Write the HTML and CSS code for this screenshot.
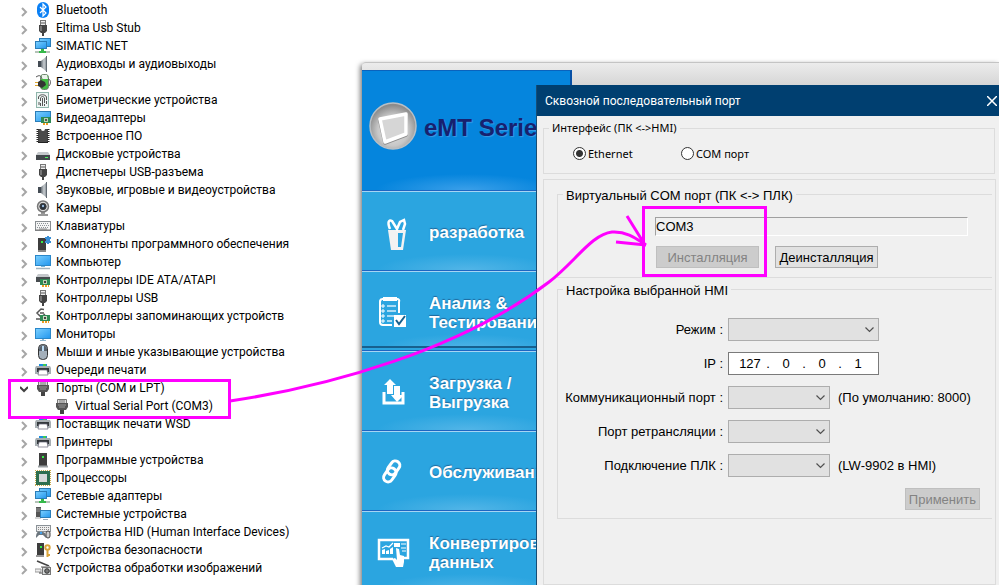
FILE: index.html
```html
<!DOCTYPE html>
<html lang="ru">
<head>
<meta charset="utf-8">
<meta name="viewport" content="width=device-width, initial-scale=1">
<title>Сквозной последовательный порт</title>
<link rel="stylesheet" href="styles.css">
</head>
<body>
<svg class="sprite" aria-hidden="true">
  <defs>
    <linearGradient id="g-screen" x1="0" y1="0" x2="1" y2="1"><stop offset="0" stop-color="#7cd0ff"/><stop offset="1" stop-color="#2196ee"/></linearGradient>
    <linearGradient id="g-metal" x1="0" y1="0" x2="1" y2="0"><stop offset="0" stop-color="#666e75"/><stop offset=".5" stop-color="#c8cdd1"/><stop offset="1" stop-color="#777f86"/></linearGradient>
    <radialGradient id="g-badge" cx=".5" cy=".6" r=".55"><stop offset="0" stop-color="#e2e2e2"/><stop offset=".6" stop-color="#c8c8c8"/><stop offset="1" stop-color="#8c8c8c"/></radialGradient>
  </defs>
  <symbol id="chevron" viewBox="0 0 8 10"><path d="M2 1l4 4-4 4" fill="none" stroke="#a6a6a6" stroke-width="2"/></symbol>
  <symbol id="chevron-open" viewBox="0 0 8 10"><path d="M0 2l4 4 4-4" fill="none" stroke="#404040" stroke-width="2"/></symbol>
  <symbol id="bluetooth" viewBox="0 0 16 16"><rect x="2" width="12" height="16" rx="6" fill="#0a80f5"/><path d="M5 5l6 6-3 3V2l3 3-6 6" fill="none" stroke="#fff" stroke-width="1.2"/></symbol>
  <symbol id="usb" viewBox="0 0 16 16"><rect x="5.500" y=".5" width="5" height="5" fill="#eee" stroke="#777"/><path d="M7 2v2M9 2v2" stroke="#555"/><path d="M4 5h8v6l-2 2H6l-2-2z" fill="#444"/><path d="M5 6h2v5H5z" fill="#777"/><path d="M7 13h2v3H7z" fill="#444"/></symbol>
  <symbol id="net" viewBox="0 0 16 16"><rect x="4.500" y=".5" width="11" height="8" fill="url(#g-screen)" stroke="#2a7db8"/><rect x=".5" y="3.500" width="11" height="7" fill="url(#g-screen)" stroke="#2a7db8"/><path d="M6 11h3v2h2v2H4v-2h2z" fill="#35b84a"/><path d="M0 13h4v2H0zM11 13h4v2h-4z" fill="#b5c3b8"/></symbol>
  <symbol id="speaker" viewBox="0 0 16 16"><path d="M3 5h3v6H3z" fill="#444c54"/><path d="M6 5l6-5v16l-6-5z" fill="url(#g-metal)"/><path d="M11 0h1v16h-1z" fill="#626a72"/></symbol>
  <symbol id="battery" viewBox="0 0 16 16"><rect x="5.500" y=".5" width="8" height="15" rx="3" fill="#43ba43" stroke="#6c7d6c"/><path d="M7 1h5l1 4H6z" fill="#e9f2e9"/><path d="M1 3c3-2 5-2 6 2M13 5c3 0 3 5 1 7" fill="none" stroke="#555"/><path d="M3 8l3-2 4 2 1 3-4 3-4-2z" fill="#333"/><path d="M0 8.500h3M0 11.500h3" stroke="#dda52c"/></symbol>
  <symbol id="finger" viewBox="0 0 16 16"><rect x="1.500" y=".5" width="12" height="15" fill="#edf5f3" stroke="#8fb5ab"/><g fill="none" stroke="#555"><path d="M3.500 7V5c1-3 7-3 8 0v3M5.500 9V6c1-2 3-2 4 0v5M4 10v3M7.500 6v8M5.500 11v3M9.500 12v2M11.500 9v3"/></g></symbol>
  <symbol id="adapter" viewBox="0 0 16 16"><rect x=".5" y="1.500" width="15" height="10" fill="url(#g-screen)" stroke="#2a7db8"/><rect x="6" y="7" width="10" height="6" fill="#2f8a55"/><path d="M9 8h4v4H9z" fill="#b7d3b0"/><path d="M10 9h2v2h-2z" fill="#555"/><path d="M8 14h6" stroke="#f09c23" stroke-width="2" stroke-dasharray="2 1"/></symbol>
  <symbol id="chip" viewBox="0 0 16 16"><path d="M3 1h3a2 2 0 0 0 4 0h3v14H3z" fill="#4a4a4a"/><path d="M2.500 1v14M13.500 1v14" stroke="#222" stroke-width="2" stroke-dasharray="1 1"/><path d="M3 14.500h10" stroke="#222"/></symbol>
  <symbol id="disk" viewBox="0 0 16 16"><path d="M3 6h10l2 3H1z" fill="#c4c8cb"/><rect x="1" y="9" width="14" height="5" fill="#42474b"/><rect x="10" y="11" width="3" height="1" fill="#4cf062"/></symbol>
  <symbol id="camera" viewBox="0 0 16 16"><circle cx="8" cy="6.500" r="5.500" fill="#ddd" stroke="#777" stroke-width="1.500"/><circle cx="8" cy="6.500" r="3.200" fill="#28313b" stroke="#444"/><circle cx="8" cy="6" r="1.200" fill="#97b8dc"/><path d="M3 15h10M6 13h4" stroke="#777" stroke-width="1.500"/></symbol>
  <symbol id="keyboard" viewBox="0 0 16 16"><rect x=".5" y="3.500" width="15" height="9" fill="#f5f5f5" stroke="#888d91"/><path d="M2 5.500h12M3 7.500h11M2 9.500h12" stroke="#8b9297" stroke-dasharray="1 1"/><path d="M4 11h8" stroke="#888"/><path d="M0 12h16" stroke="#777"/></symbol>
  <symbol id="tower" viewBox="0 0 16 16"><path d="M4 1h8v13H4z" fill="#3d3d3d"/><path d="M7 4h2v2H7z" fill="#35ee45"/><path d="M3 14.500h10" stroke="#9aa0a3" stroke-width="2"/></symbol>
  <symbol id="component" viewBox="0 0 16 16"><path d="M3 2h8v12H3z" fill="#3d3d3d"/><path d="M6 5h2v2H6z" fill="#35ee45"/><path d="M3 15h8" stroke="#888" stroke-width="2"/><path d="M10 1h2V0h2v1h2v2h-1v2h1v2h-2v1h-2V7h-2V5h1V3h-1z" fill="#3a8fd6"/></symbol>
  <symbol id="computer" viewBox="0 0 16 16"><rect x=".5" y="1.500" width="15" height="10" fill="url(#g-screen)" stroke="#2a87c9"/><path d="M6 12h4v1H6z" fill="#75b5dc"/><path d="M1 14.500h14" stroke="#a2b4bf" stroke-width="1.500"/></symbol>
  <symbol id="ide" viewBox="0 0 16 16"><path d="M3 2h10l2 3H1z" fill="#c4c8cb"/><path d="M1 5h14v5H1z" fill="#474c4f"/><path d="M5 7h10v6H5z" fill="#2f8a55"/><path d="M8 8h4v4H8z" fill="#b7d3b0"/><path d="M9 9h2v2H9z" fill="#444"/><path d="M7 14h7" stroke="#f09c23" stroke-width="2" stroke-dasharray="2 1"/></symbol>
  <symbol id="storage" viewBox="0 0 16 16"><path d="M9 1.500L6 1 2 5l4 4 4-3M1 11h5M5 5h4" fill="none" stroke="#555" stroke-width="1.500"/><path d="M5 7h10v6H5z" fill="#2f8a55"/><path d="M8 8h4v4H8z" fill="#c7dcc1"/><path d="M9 9h2v2H9z" fill="#444"/><path d="M7 14h7" stroke="#f09c23" stroke-width="2" stroke-dasharray="2 1"/></symbol>
  <symbol id="monitor" viewBox="0 0 16 16"><rect x=".5" y="2.500" width="15" height="10" fill="url(#g-screen)" stroke="#2a87c9"/><path d="M7 13h2v1h2v1H5v-1h2z" fill="#8fb7cf"/></symbol>
  <symbol id="mouse" viewBox="0 0 16 16"><rect x="3.500" y=".5" width="9" height="15" rx="4" fill="#a3afba" stroke="#333"/><path d="M4 5c1-5 7-5 8 0v2H4z" fill="#5a646e"/><rect x="7" y="2" width="2" height="5" fill="#b9dbf5"/></symbol>
  <symbol id="printer" viewBox="0 0 16 16"><path d="M4 2h8v3H4z" fill="#1b8fe2"/><path d="M8 2h3v2H8z" fill="#41cb52"/><path d="M1 4h14l1 2v6H0V6z" fill="#a8afb3"/><path d="M2 6h12v4H2z" fill="#34393c"/><path d="M4 8h8l1 5H3z" fill="#fff" stroke="#667" stroke-width=".7"/></symbol>
  <symbol id="port" viewBox="0 0 16 16"><path d="M3.500 1.500h9v4h-9z" fill="#ddd" stroke="#777"/><path d="M6 2v3M8 2v3M10 2v3" stroke="#777"/><path d="M2 5h12v4l-2 3H4L2 9z" fill="#555"/><path d="M4 7h8M5 9h6" stroke="#999"/><path d="M6 12h4v4H6z" fill="#444"/></symbol>
  <symbol id="cpu" viewBox="0 0 16 16"><path d="M0 .5h16M0 15.500h16M.5 0v16M15.500 0v16" stroke="#c7a94c" stroke-dasharray="1 1"/><rect x="1" y="1" width="14" height="14" fill="#2d6e4e"/><path d="M4 4h8v8H4z" fill="#d7d9d8"/></symbol>
  <symbol id="system" viewBox="0 0 16 16"><path d="M1 1h5v10H1z" fill="#555"/><path d="M1 3h5M1 5h5" stroke="#999"/><path d="M0 12h6" stroke="#aaa"/><rect x="5.500" y="4.500" width="10" height="7" fill="url(#g-screen)" stroke="#2a7db8"/><path d="M8 13.500h5" stroke="#9ab"/></symbol>
  <symbol id="hid" viewBox="0 0 16 16"><rect x="1.500" y="1.500" width="14" height="6" fill="#eee" stroke="#8b9297"/><path d="M3 3.500h11M3 5.500h11" stroke="#888" stroke-dasharray="1 1"/><path d="M1 14c0-6 2-7 4-6h3c2 0 3 3 3 6l-3-3H4z" fill="#6b757d"/><circle cx="6" cy="9" r="1.200" fill="#46a3ee"/><rect x="11" y="7" width="4" height="7" rx="2" fill="#ccc" stroke="#444"/></symbol>
  <symbol id="security" viewBox="0 0 16 16"><path d="M2 1h7v12H2z" fill="#3d3d3d"/><path d="M5 4h2v2H5z" fill="#35ee45"/><path d="M1 14h8" stroke="#999" stroke-width="2"/><circle cx="12.500" cy="5.500" r="2.200" fill="none" stroke="#d9a43b" stroke-width="2"/><path d="M12.500 8v7M13 13h2" stroke="#d9a43b" stroke-width="2"/></symbol>
  <symbol id="imaging" viewBox="0 0 16 16"><path d="M2 1l12 5" stroke="#444" stroke-width="1.500"/><path d="M6 6h9v2H6z" fill="#aaa"/><path d="M0 9h6v3H0z" fill="#eee" stroke="#999"/><path d="M4 13h5" stroke="#444"/><rect x="7.500" y="7.500" width="8" height="7" fill="#d7dada" stroke="#777"/><circle cx="12" cy="11" r="2.300" fill="#777" stroke="#333"/></symbol>
</svg>

<main class="desktop">
  <nav class="tree" aria-label="Устройства">
    <ul>
      <li class="node"><svg class="arrow"><use href="#chevron"/></svg><svg class="icon"><use href="#bluetooth"/></svg>Bluetooth</li>
      <li class="node"><svg class="arrow"><use href="#chevron"/></svg><svg class="icon"><use href="#usb"/></svg>Eltima Usb Stub</li>
      <li class="node"><svg class="arrow"><use href="#chevron"/></svg><svg class="icon"><use href="#net"/></svg>SIMATIC NET</li>
      <li class="node"><svg class="arrow"><use href="#chevron"/></svg><svg class="icon"><use href="#speaker"/></svg>Аудиовходы и аудиовыходы</li>
      <li class="node"><svg class="arrow"><use href="#chevron"/></svg><svg class="icon"><use href="#battery"/></svg>Батареи</li>
      <li class="node"><svg class="arrow"><use href="#chevron"/></svg><svg class="icon"><use href="#finger"/></svg>Биометрические устройства</li>
      <li class="node"><svg class="arrow"><use href="#chevron"/></svg><svg class="icon"><use href="#adapter"/></svg>Видеоадаптеры</li>
      <li class="node"><svg class="arrow"><use href="#chevron"/></svg><svg class="icon"><use href="#chip"/></svg>Встроенное ПО</li>
      <li class="node"><svg class="arrow"><use href="#chevron"/></svg><svg class="icon"><use href="#disk"/></svg>Дисковые устройства</li>
      <li class="node"><svg class="arrow"><use href="#chevron"/></svg><svg class="icon"><use href="#usb"/></svg>Диспетчеры USB-разъема</li>
      <li class="node"><svg class="arrow"><use href="#chevron"/></svg><svg class="icon"><use href="#speaker"/></svg>Звуковые, игровые и видеоустройства</li>
      <li class="node"><svg class="arrow"><use href="#chevron"/></svg><svg class="icon"><use href="#camera"/></svg>Камеры</li>
      <li class="node"><svg class="arrow"><use href="#chevron"/></svg><svg class="icon"><use href="#keyboard"/></svg>Клавиатуры</li>
      <li class="node"><svg class="arrow"><use href="#chevron"/></svg><svg class="icon"><use href="#component"/></svg>Компоненты программного обеспечения</li>
      <li class="node"><svg class="arrow"><use href="#chevron"/></svg><svg class="icon"><use href="#computer"/></svg>Компьютер</li>
      <li class="node"><svg class="arrow"><use href="#chevron"/></svg><svg class="icon"><use href="#ide"/></svg>Контроллеры IDE ATA/ATAPI</li>
      <li class="node"><svg class="arrow"><use href="#chevron"/></svg><svg class="icon"><use href="#usb"/></svg>Контроллеры USB</li>
      <li class="node"><svg class="arrow"><use href="#chevron"/></svg><svg class="icon"><use href="#storage"/></svg>Контроллеры запоминающих устройств</li>
      <li class="node"><svg class="arrow"><use href="#chevron"/></svg><svg class="icon"><use href="#monitor"/></svg>Мониторы</li>
      <li class="node"><svg class="arrow"><use href="#chevron"/></svg><svg class="icon"><use href="#mouse"/></svg>Мыши и иные указывающие устройства</li>
      <li class="node"><svg class="arrow"><use href="#chevron"/></svg><svg class="icon"><use href="#printer"/></svg>Очереди печати</li>
      <li class="node"><svg class="arrow"><use href="#chevron-open"/></svg><svg class="icon"><use href="#port"/></svg>Порты (COM и LPT)</li>
      <li class="node child"><svg class="icon"><use href="#port"/></svg>Virtual Serial Port (COM3)</li>
      <li class="node"><svg class="arrow"><use href="#chevron"/></svg><svg class="icon"><use href="#printer"/></svg>Поставщик печати WSD</li>
      <li class="node"><svg class="arrow"><use href="#chevron"/></svg><svg class="icon"><use href="#printer"/></svg>Принтеры</li>
      <li class="node"><svg class="arrow"><use href="#chevron"/></svg><svg class="icon"><use href="#tower"/></svg>Программные устройства</li>
      <li class="node"><svg class="arrow"><use href="#chevron"/></svg><svg class="icon"><use href="#cpu"/></svg>Процессоры</li>
      <li class="node"><svg class="arrow"><use href="#chevron"/></svg><svg class="icon"><use href="#net"/></svg>Сетевые адаптеры</li>
      <li class="node"><svg class="arrow"><use href="#chevron"/></svg><svg class="icon"><use href="#system"/></svg>Системные устройства</li>
      <li class="node"><svg class="arrow"><use href="#chevron"/></svg><svg class="icon"><use href="#hid"/></svg>Устройства HID (Human Interface Devices)</li>
      <li class="node"><svg class="arrow"><use href="#chevron"/></svg><svg class="icon"><use href="#security"/></svg>Устройства безопасности</li>
      <li class="node"><svg class="arrow"><use href="#chevron"/></svg><svg class="icon"><use href="#imaging"/></svg>Устройства обработки изображений</li>
    </ul>
  </nav>

  <section class="app">
    <div class="menu">
      <header class="brand">
        <svg class="badge" viewBox="0 0 48 48" aria-hidden="true"><circle cx="24" cy="24" r="23" fill="url(#g-badge)" stroke="#b9bfc4" stroke-width="1.500"/><path d="M11 19l26-6v20l-21 8z" fill="#d6d6d6" stroke="#8d8d8d" stroke-width="3.500" stroke-linejoin="round"/><path d="M11 17l26-5v20l-21 8z" fill="#d6d6d6" stroke="#fff" stroke-width="3.500" stroke-linejoin="round"/></svg>
        <h1>eMT Series</h1>
      </header>
      <button class="entry" type="button">
        <svg class="glyph" viewBox="0 0 36 36" aria-hidden="true"><path d="M11 15h18l-3 20H14z" fill="#f2f2f2"/><path d="M21 18h5l-2 14h-3z" fill="#2ba5e0"/><path d="M13 14c-3-7-1-10 2-8l5 8 3-7 4-2 1 4-2 6" fill="none" stroke="#fff" stroke-width="2.500"/></svg>
        <span>разработка</span>
      </button>
      <button class="entry last" type="button">
        <svg class="glyph" viewBox="0 0 36 36" aria-hidden="true"><path d="M5 4h15a2 2 0 0 1 2 3v11M5 4a3 3 0 0 0-2 3v20a3 3 0 0 0 3 3h9" fill="none" stroke="#fff" stroke-width="2"/><path d="M6 2h14v4H6z" fill="#fff"/><path d="M10 11h9M10 16h9M10 21h8M10 26h5" stroke="#d8eefa" stroke-width="1.500"/><path d="M5 10h2v2H5zM5 15h2v2H5zM5 20h2v2H5zM5 25h2v2H5z" fill="none" stroke="#fff"/><path d="M17 20h12v12H17z" fill="#fff"/><path d="M19 25l3 4 6-8" fill="none" stroke="#17608e" stroke-width="2"/></svg>
        <span>Анализ &amp;<br>Тестирование</span>
      </button>
      <button class="entry" type="button">
        <svg class="glyph" viewBox="0 0 36 36" aria-hidden="true"><path d="M7 17v11h19V17" fill="none" stroke="#fff" stroke-width="3"/><path d="M13 4l6 6h-3v9h-6v-9H7zM17 11h6v9h4l-7 7-6-7h3z" fill="#fff"/></svg>
        <span>Загрузка /<br>Выгрузка</span>
      </button>
      <button class="entry" type="button">
        <svg class="glyph" viewBox="0 0 36 36" aria-hidden="true"><g fill="none" stroke="#fff" stroke-width="3" transform="rotate(-55 15 16)"><rect x="3" y="12" width="15" height="9" rx="4.500"/><rect x="11" y="11" width="15" height="9" rx="4.500"/></g></svg>
        <span>Обслуживание</span>
      </button>
      <button class="entry" type="button">
        <svg class="glyph" viewBox="0 0 36 36" aria-hidden="true"><path d="M16 24H2V5h29v18h-4" fill="none" stroke="#fff" stroke-width="2.500"/><path d="M5 19v-4l3-1v5zM9 19v-3l3-1v4zM13 19v-5l3-2v7z" fill="#fff"/><path d="M5 13l4-2 3 1 4-4M24 9h5M24 13h5M25 16h4" fill="none" stroke="#fff" stroke-width="1.200"/><path d="M17 8h6v4h-6zM19 13l3 1 1 6 4 1v6l-1 5h-7l-4-8 3-1 2 2z" fill="#fff"/></svg>
        <span>Конвертирование<br>данных</span>
      </button>
    </div>
  </section>

  <section class="dialog" role="dialog" aria-labelledby="dialog-title">
    <header class="titlebar">
      <h2 id="dialog-title">Сквозной последовательный порт</h2>
      <button class="close" type="button" aria-label="Закрыть"><svg viewBox="0 0 10 10"><path d="M0 0l10 10M10 0L0 10" stroke="#fff" stroke-width="1.500"/></svg></button>
    </header>
    <form class="content">
      <fieldset class="interface">
        <legend>Интерфейс (ПК &lt;-&gt;HMI)</legend>
        <label><input type="radio" name="iface" checked>Ethernet</label>
        <label><input type="radio" name="iface">COM порт</label>
      </fieldset>
      <div class="panel">
        <fieldset class="virtual">
          <legend>Виртуальный COM порт (ПК &lt;-&gt; ПЛК)</legend>
          <input class="port-name" type="text" value="COM3" aria-label="Виртуальный COM порт" readonly>
          <div class="actions">
            <button class="btn" type="button" disabled>Инсталляция</button>
            <button class="btn" type="button">Деинсталляция</button>
          </div>
        </fieldset>
        <fieldset class="settings">
          <legend>Настройка выбранной HMI</legend>
          <div class="fields">
            <label for="mode">Режим :</label>
            <select id="mode" class="wide"></select>
            <label for="ip">IP :</label>
            <div class="ip">
              <input id="ip" type="text" value="127"><span>.</span><input type="text" value="0" aria-label="IP 2"><span>.</span><input type="text" value="0" aria-label="IP 3"><span>.</span><input type="text" value="1" aria-label="IP 4">
            </div>
            <label for="comm">Коммуникационный порт :</label>
            <div class="with-note"><select id="comm"></select><span>(По умолчанию: 8000)</span></div>
            <label for="relay">Порт ретрансляции :</label>
            <select id="relay"></select>
            <label for="plc">Подключение ПЛК :</label>
            <div class="with-note"><select id="plc"></select><span>(LW-9902 в HMI)</span></div>
          </div>
          <button class="btn apply" type="button" disabled>Применить</button>
        </fieldset>
      </div>
    </form>
  </section>

  <svg class="marks" aria-hidden="true">
    <g fill="none" stroke="#f0f" stroke-width="3">
      <rect x="9.500" y="380.500" width="220" height="37"/>
      <rect x="643.500" y="207.500" width="122" height="68"/>
      <path d="M230 401C330 386 460 350 549 282C575 262 592 234 612 232C628 231 638 240 646 245"/>
      <path d="M627 216l18 29M616 242l30 3"/>
    </g>
  </svg>
</main>
</body>
</html>
```
FILE: styles.css
```css
* {
  box-sizing: border-box;
}

body {
  margin: 0;
  background: #fff;
  color: #000;
  font-family: Roboto, "Noto Sans", sans-serif;
  font-size: 12px;
}

button,
input,
select {
  font: inherit;
  color: inherit;
  border-radius: 0;
}

.sprite {
  position: absolute;
  width: 0;
  height: 0;
}

.desktop {
  position: relative;
  display: grid;
  grid-template-columns: 362px 1fr;
  height: 100vh;
  overflow: hidden;
}

/* Device tree */
.tree ul {
  margin: 0;
  padding: 1px 0 0 20px;
  list-style: none;
}

.node {
  display: flex;
  align-items: center;
  height: 18px;
  line-height: 18px;
  white-space: nowrap;
}

.node.child {
  padding-left: 34px;
}

.arrow {
  width: 8px;
  height: 10px;
  margin: 3px 7px 0 0;
}

.icon {
  width: 16px;
  height: 16px;
  margin-right: 5px;
}

/* Product launcher */
.app {
  margin-top: 62px;
  padding-top: 8px;
  border-top: 1px solid #c4c4c4;
  border-top-left-radius: 4px;
  background: linear-gradient(#ececec, #d4d4d4 24px);
  box-shadow: -2px 2px 5px rgba(0, 0, 0, .5);
}

.menu {
  width: 210px;
  font-family: "Liberation Sans", sans-serif;
}

.brand {
  display: flex;
  align-items: center;
  gap: 7px;
  height: 120px;
  margin-top: -1px;
  padding: 0 0 10px 7px;
  border-top: 1px solid #0a63bd;
  border-right: 2px solid #0750a5;
  background: radial-gradient(ellipse 90px 16px at 50% 100%, #3a9fe9, transparent), #0585dd;
}

.badge {
  flex: none;
  width: 48px;
  height: 48px;
}

.brand h1 {
  margin: 5px 0 0;
  color: #17216f;
  font-size: 24px;
  line-height: 32px;
  white-space: nowrap;
  text-shadow: 1px 1px 1px #3a9be3;
}

.entry {
  display: grid;
  grid-template-columns: 67px 1fr;
  align-items: center;
  width: 100%;
  height: 80px;
  padding: 4px 0 0;
  border: 0;
  border-top: 1px solid #1d66c2;
  background: radial-gradient(ellipse 90px 16px at 50% 100%, #52b5e7, transparent), #2ba5e0;
  box-shadow: inset 0 1px #a6d4f4;
  color: #fff;
  font-size: 17px;
  font-weight: bold;
  line-height: 19px;
  text-align: left;
  text-shadow: 0 -1px 1px #20679a;
  white-space: nowrap;
}

.entry.last {
  box-shadow: inset 0 1px #a6d4f4, inset 0 -2px #2ba5e0, inset 0 -4px #17608e;
}

.glyph {
  width: 36px;
  height: 36px;
  margin-left: 15px;
}

/* Pass-through dialog */
.dialog {
  position: absolute;
  inset: 85px 0 0 536px;
  display: flex;
  flex-direction: column;
  border-left: 1px solid #174d75;
  background: #f0f0f0;
}

.titlebar {
  display: flex;
  flex: none;
  align-items: center;
  justify-content: space-between;
  height: 31px;
  padding: 0 2px 0 8px;
  background: #003f70;
  color: #fff;
}

.titlebar h2 {
  margin: 0;
  font-size: 12px;
  font-weight: normal;
}

.close {
  width: 10px;
  height: 10px;
  padding: 0;
  border: 0;
  background: none;
}

.close svg {
  display: block;
}

.content {
  display: flex;
  flex: 1;
  flex-direction: column;
  gap: 5px;
  padding: 4px 3px 0 6px;
  font-family: "Liberation Sans", sans-serif;
  font-size: 13px;
}

fieldset {
  min-width: 0;
  margin: 0;
  padding: 0;
  border: 1px solid #dcdcdc;
}

legend {
  height: 16px;
  margin-left: 5px;
  padding: 0 3px;
  line-height: 16px;
}

.interface {
  display: flex;
  height: 54px;
  margin-right: 1px;
  font-family: "Noto Sans", sans-serif;
  font-size: 11px;
}

.interface label {
  display: inline-flex;
  align-items: center;
  gap: 2px;
  width: 108px;
  height: 34px;
}

.interface label:first-of-type {
  margin-left: 29px;
}

.interface input {
  appearance: none;
  width: 13px;
  height: 13px;
  margin: 0;
  border: 1px solid #333;
  border-radius: 50%;
  background: #fff;
}

.interface input:checked {
  background: radial-gradient(circle, #333 3px, #fff 4px);
}

.panel {
  flex: 1;
  padding: 6px 3px 0 13px;
  border: 1px solid #dcdcdc;
}

.panel fieldset {
  border-right: 0;
}

.panel legend {
  line-height: 20px;
}

.virtual {
  height: 92px;
  margin-bottom: 3px;
}

.port-name {
  display: block;
  width: 313px;
  height: 19px;
  margin: 15px 0 10px 97px;
  padding: 0;
  border: 1px solid;
  border-color: #a0a0a0 #fff #fff #a0a0a0;
  background: #f0f0f0;
}

.actions {
  display: flex;
  gap: 16px;
  margin-left: 98px;
}

.btn {
  min-width: 103px;
  height: 22px;
  padding: 0 3px;
  border: 1px solid #adadad;
  background: #e1e1e1;
}

.btn:disabled {
  border-color: #bfbfbf;
  background: #ccc;
  color: #838383;
}

.settings {
  height: 238px;
}

.fields {
  display: grid;
  grid-template-columns: 165px 1fr;
  grid-auto-rows: 23px;
  gap: 11px 5px;
  align-items: center;
  padding-top: 21px;
  white-space: nowrap;
}

.fields label {
  text-align: right;
}

.fields select {
  appearance: none;
  width: 102px;
  height: 23px;
  border: 1px solid #adadad;
  background: #e1e1e1 url("data:image/svg+xml,%3Csvg xmlns='http://www.w3.org/2000/svg' width='9' height='6'%3E%3Cpath d='M.5.5l4 4 4-4' fill='none' stroke='%23505050' stroke-width='1.2'/%3E%3C/svg%3E") no-repeat right 4px center;
}

.fields select.wide,
.ip {
  width: 151px;
}

.ip {
  display: flex;
  align-items: center;
  height: 23px;
  padding-left: 6px;
  border: 1px solid #7a7a7a;
  background: #fff;
}

.ip input {
  width: 30px;
  padding: 0;
  border: 0;
  background: none;
  text-align: center;
}

.ip span {
  width: 6px;
  text-align: center;
}

.with-note {
  display: flex;
  align-items: center;
  gap: 8px;
}

.settings .apply {
  display: block;
  min-width: 75px;
  margin: 11px 12px 0 auto;
}

/* Highlight annotations */
.marks {
  position: absolute;
  inset: 0;
  width: 100%;
  height: 100%;
  pointer-events: none;
}
```
